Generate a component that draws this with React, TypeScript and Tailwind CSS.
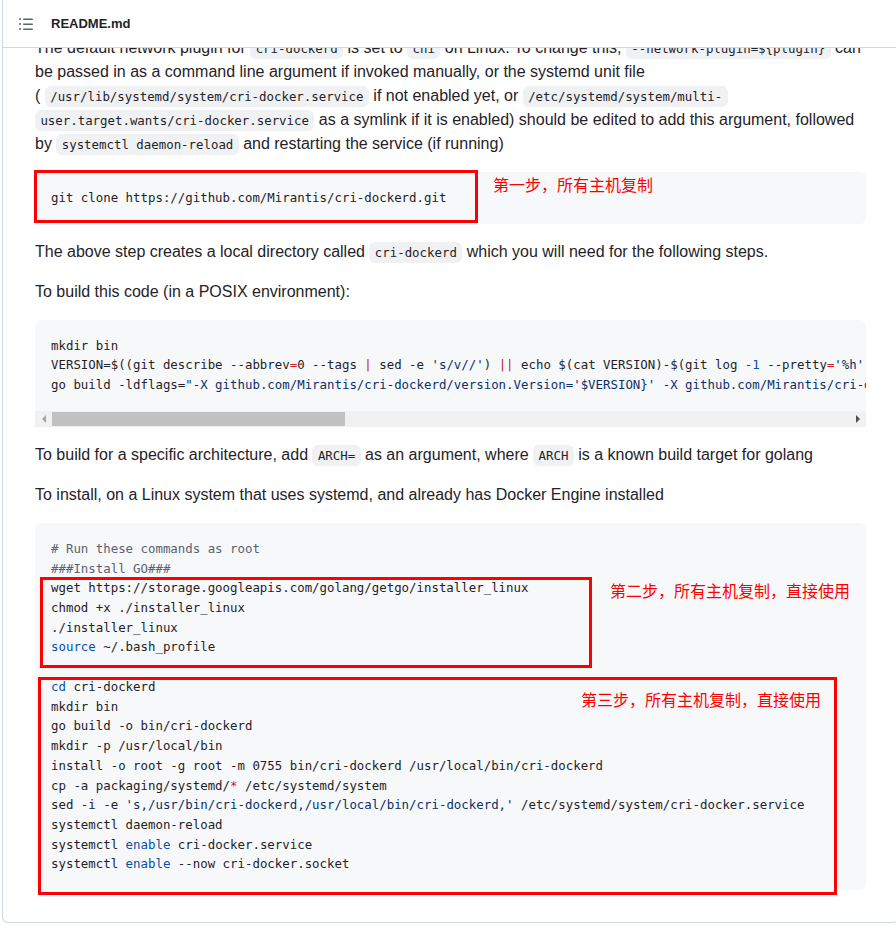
import React from "react";

const red = "text-[#cf222e]";
const navy = "text-[#0a3069]";
const blue = "text-[#0550ae]";

function C({ children }: { children: React.ReactNode }) {
  return (
    <code className="rounded-md bg-[#eff1f3] px-[5.4px] py-[3px] font-['DejaVu_Sans_Mono',monospace] text-[12.4px] leading-none">
      {children}
    </code>
  );
}

function Note({ text, className }: { text: string; className: string }) {
  return (
    <span
      className={`absolute whitespace-nowrap font-['Noto_Sans_CJK_SC',sans-serif] text-[16px] leading-4 text-[#ff0000] ${className}`}
    >
      {text}
    </span>
  );
}

const preClass =
  "overflow-hidden whitespace-pre p-4 font-['DejaVu_Sans_Mono',monospace] text-[12.4px] leading-[19.72px] text-[#1f2328]";

export default function App() {
  return (
    <div className="h-[925px] w-[896px] overflow-hidden bg-white font-['Liberation_Sans',Arial,sans-serif] text-[#1f2328]">
      <div className="ml-[2px] w-[897px] rounded-b-md border-x border-b border-[#d0d7de]">
        {/* header */}
        <div className="flex h-[48px] items-center border-b border-[#d0d7de] pl-[15px]">
          <svg width="16" height="16" viewBox="0 0 16 16" fill="#59636e">
            <path d="M5.75 2.5h8.5a.75.75 0 0 1 0 1.5h-8.5a.75.75 0 0 1 0-1.5Zm0 5h8.5a.75.75 0 0 1 0 1.5h-8.5a.75.75 0 0 1 0-1.5Zm0 5h8.5a.75.75 0 0 1 0 1.5h-8.5a.75.75 0 0 1 0-1.5ZM2 14a1 1 0 1 1 0-2 1 1 0 0 1 0 2Zm1-6a1 1 0 1 1-2 0 1 1 0 0 1 2 0ZM2 4a1 1 0 1 1 0-2 1 1 0 0 1 0 2Z" />
          </svg>
          <span className="ml-[17px] text-[13px] font-semibold">README.md</span>
        </div>

        {/* body, scrolled */}
        <div className="overflow-hidden">
          <div className="-mt-3 px-8 pb-8 text-[16px] leading-6">
            <p className="mb-4 whitespace-nowrap">
              The default network plugin for <C>cri-dockerd</C> is set to <C>cni</C> on Linux. To change this,{" "}
              <C>{"--network-plugin=${plugin}"}</C> can
              <br />
              be passed in as a command line argument if invoked manually, or the systemd unit file
              <br />( <C>/usr/lib/systemd/system/cri-docker.service</C> if not enabled yet, or{" "}
              <C>/etc/systemd/system/multi-</C>
              <br />
              <C>user.target.wants/cri-docker.service</C> as a symlink if it is enabled) should be edited to add this
              argument, followed
              <br />
              by <C>systemctl daemon-reload</C> and restarting the service (if running)
            </p>

            <div className="relative mb-4 rounded-md bg-[#f6f8fa]">
              <pre className={preClass}>git clone https://github.com/Mirantis/cri-dockerd.git</pre>
              <div className="absolute -left-[1px] -top-[2px] h-[53px] w-[444px] border-[3px] border-[#ff0000]" />
              <Note text="第一步，所有主机复制" className="left-[458px] top-[4px]" />
            </div>

            <p className="mb-4">
              The above step creates a local directory called <C>cri-dockerd</C> which you will need for the following
              steps.
            </p>
            <p className="mb-4">To build this code (in a POSIX environment):</p>

            <div className="mb-4 overflow-hidden rounded-t-md bg-[#f6f8fa]">
              <pre className={preClass}>
                {"mkdir bin\nVERSION=$((git describe --abbrev"}
                <span className={red}>=</span>
                {"0 --tags "}
                <span className={red}>|</span>
                {" sed -e "}
                <span className={navy}>{"'s/v//'"}</span>
                {") "}
                <span className={red}>||</span>
                {" echo $(cat VERSION)-$(git log "}
                <span className={blue}>-1</span>
                {" --pretty"}
                <span className={red}>=</span>
                <span className={navy}>{"'%h'"}</span>
                {") PRERELEASE=$(grep -q dev <<< \"${VERSION}\" && echo \"pre\" || echo \"\")\ngo build -ldflags="}
                <span className={navy}>
                  {
                    "\"-X github.com/Mirantis/cri-dockerd/version.Version='$VERSION}' -X github.com/Mirantis/cri-dockerd/version.PreRelease='$PRERELEASE'\""
                  }
                </span>
                {" -o cri-dockerd"}
              </pre>
              <div className="flex h-[16px] items-center bg-[#f1f1f1]">
                <div className="flex w-[17px] justify-center">
                  <span className="h-0 w-0 border-y-[4px] border-r-[4px] border-y-transparent border-r-[#a3a3a3]" />
                </div>
                <div className="h-[14px] w-[293px] bg-[#c1c1c1]" />
                <div className="flex-1" />
                <div className="flex w-[17px] justify-center">
                  <span className="h-0 w-0 border-y-[4px] border-l-[4px] border-y-transparent border-l-[#505050]" />
                </div>
              </div>
            </div>

            <p className="mb-4">
              To build for a specific architecture, add <C>ARCH=</C> as an argument, where <C>ARCH</C> is a known build
              target for golang
            </p>
            <p className="mb-4">To install, on a Linux system that uses systemd, and already has Docker Engine installed</p>

            <div className="relative rounded-md bg-[#f6f8fa]">
              <pre className={preClass}>
                <span className="text-[#59636e]">{"# Run these commands as root\n###Install GO###"}</span>
                {"\nwget https://storage.googleapis.com/golang/getgo/installer_linux\nchmod +x ./installer_linux\n./installer_linux\n"}
                <span className={blue}>source</span>
                {" ~/.bash_profile\n\n"}
                <span className={blue}>cd</span>
                {
                  " cri-dockerd\nmkdir bin\ngo build -o bin/cri-dockerd\nmkdir -p /usr/local/bin\ninstall -o root -g root -m 0755 bin/cri-dockerd /usr/local/bin/cri-dockerd\ncp -a packaging/systemd/"
                }
                <span className={red}>*</span>
                {" /etc/systemd/system\nsed -i -e "}
                <span className={navy}>{"'s,/usr/bin/cri-dockerd,/usr/local/bin/cri-dockerd,'"}</span>
                {" /etc/systemd/system/cri-docker.service\nsystemctl daemon-reload\nsystemctl "}
                <span className={blue}>enable</span>
                {" cri-docker.service\nsystemctl "}
                <span className={blue}>enable</span>
                {" --now cri-docker.socket"}
              </pre>
              <div className="absolute left-[5px] top-[54px] h-[91px] w-[552px] border-[3px] border-[#ff0000]" />
              <Note text="第二步，所有主机复制，直接使用" className="left-[575px] top-[59px]" />
              <div className="absolute left-[3px] top-[154px] h-[218px] w-[799px] border-[3px] border-[#ff0000]" />
              <Note text="第三步，所有主机复制，直接使用" className="left-[546px] top-[168px]" />
            </div>
          </div>
        </div>
      </div>
    </div>
  );
}
